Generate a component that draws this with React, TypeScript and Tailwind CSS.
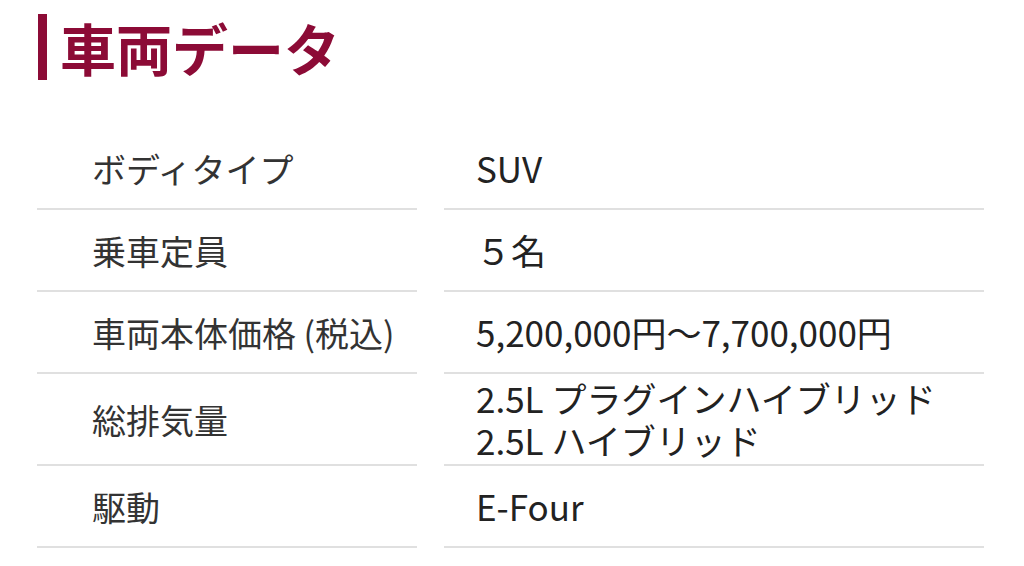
const ROWS: { label: string; value: string[] }[] = [
  { label: "ボディタイプ", value: ["SUV"] },
  { label: "乗車定員", value: ["５名"] },
  { label: "車両本体価格 (税込)", value: ["5,200,000円～7,700,000円"] },
  { label: "総排気量", value: ["2.5L プラグインハイブリッド", "2.5L ハイブリッド"] },
  { label: "駆動", value: ["E-Four"] },
];

export default function App() {
  return (
    <div
      className="w-[1024px] h-[566px] bg-white overflow-hidden"
      style={{ fontFamily: '"Noto Sans CJK JP", "Noto Sans", sans-serif' }}
    >
      {/* Heading */}
      <div className="flex items-center h-[66px] mt-[14px] pl-[38px]">
        <div className="w-[9px] h-full bg-[#8c0b36]" />
        <h1 className="ml-[13px] text-[56px] font-bold leading-none text-[#8c0b36]">
          車両データ
        </h1>
      </div>

      {/* Spec table */}
      <div className="mt-[48px] pl-[37px] pr-[40px]">
        {ROWS.map((row, i) => (
          <div key={i} className="flex gap-[27px]">
            <div
              className={`w-[380px] flex items-center pl-[55px] border-b-2 border-[#e0e0e0] text-[34px] text-[#333] ${
                row.value.length > 1 ? "h-[92px]" : "h-[82px]"
              }`}
            >
              {row.label}
            </div>
            <div
              className={`flex-1 flex flex-col justify-center pl-[32px] border-b-2 border-[#e0e0e0] text-[35px] text-[#222] leading-[42px] ${
                row.value.length > 1 ? "h-[92px]" : "h-[82px]"
              }`}
            >
              {row.value.map((v, j) => (
                <span key={j}>{v}</span>
              ))}
            </div>
          </div>
        ))}
      </div>
    </div>
  );
}
